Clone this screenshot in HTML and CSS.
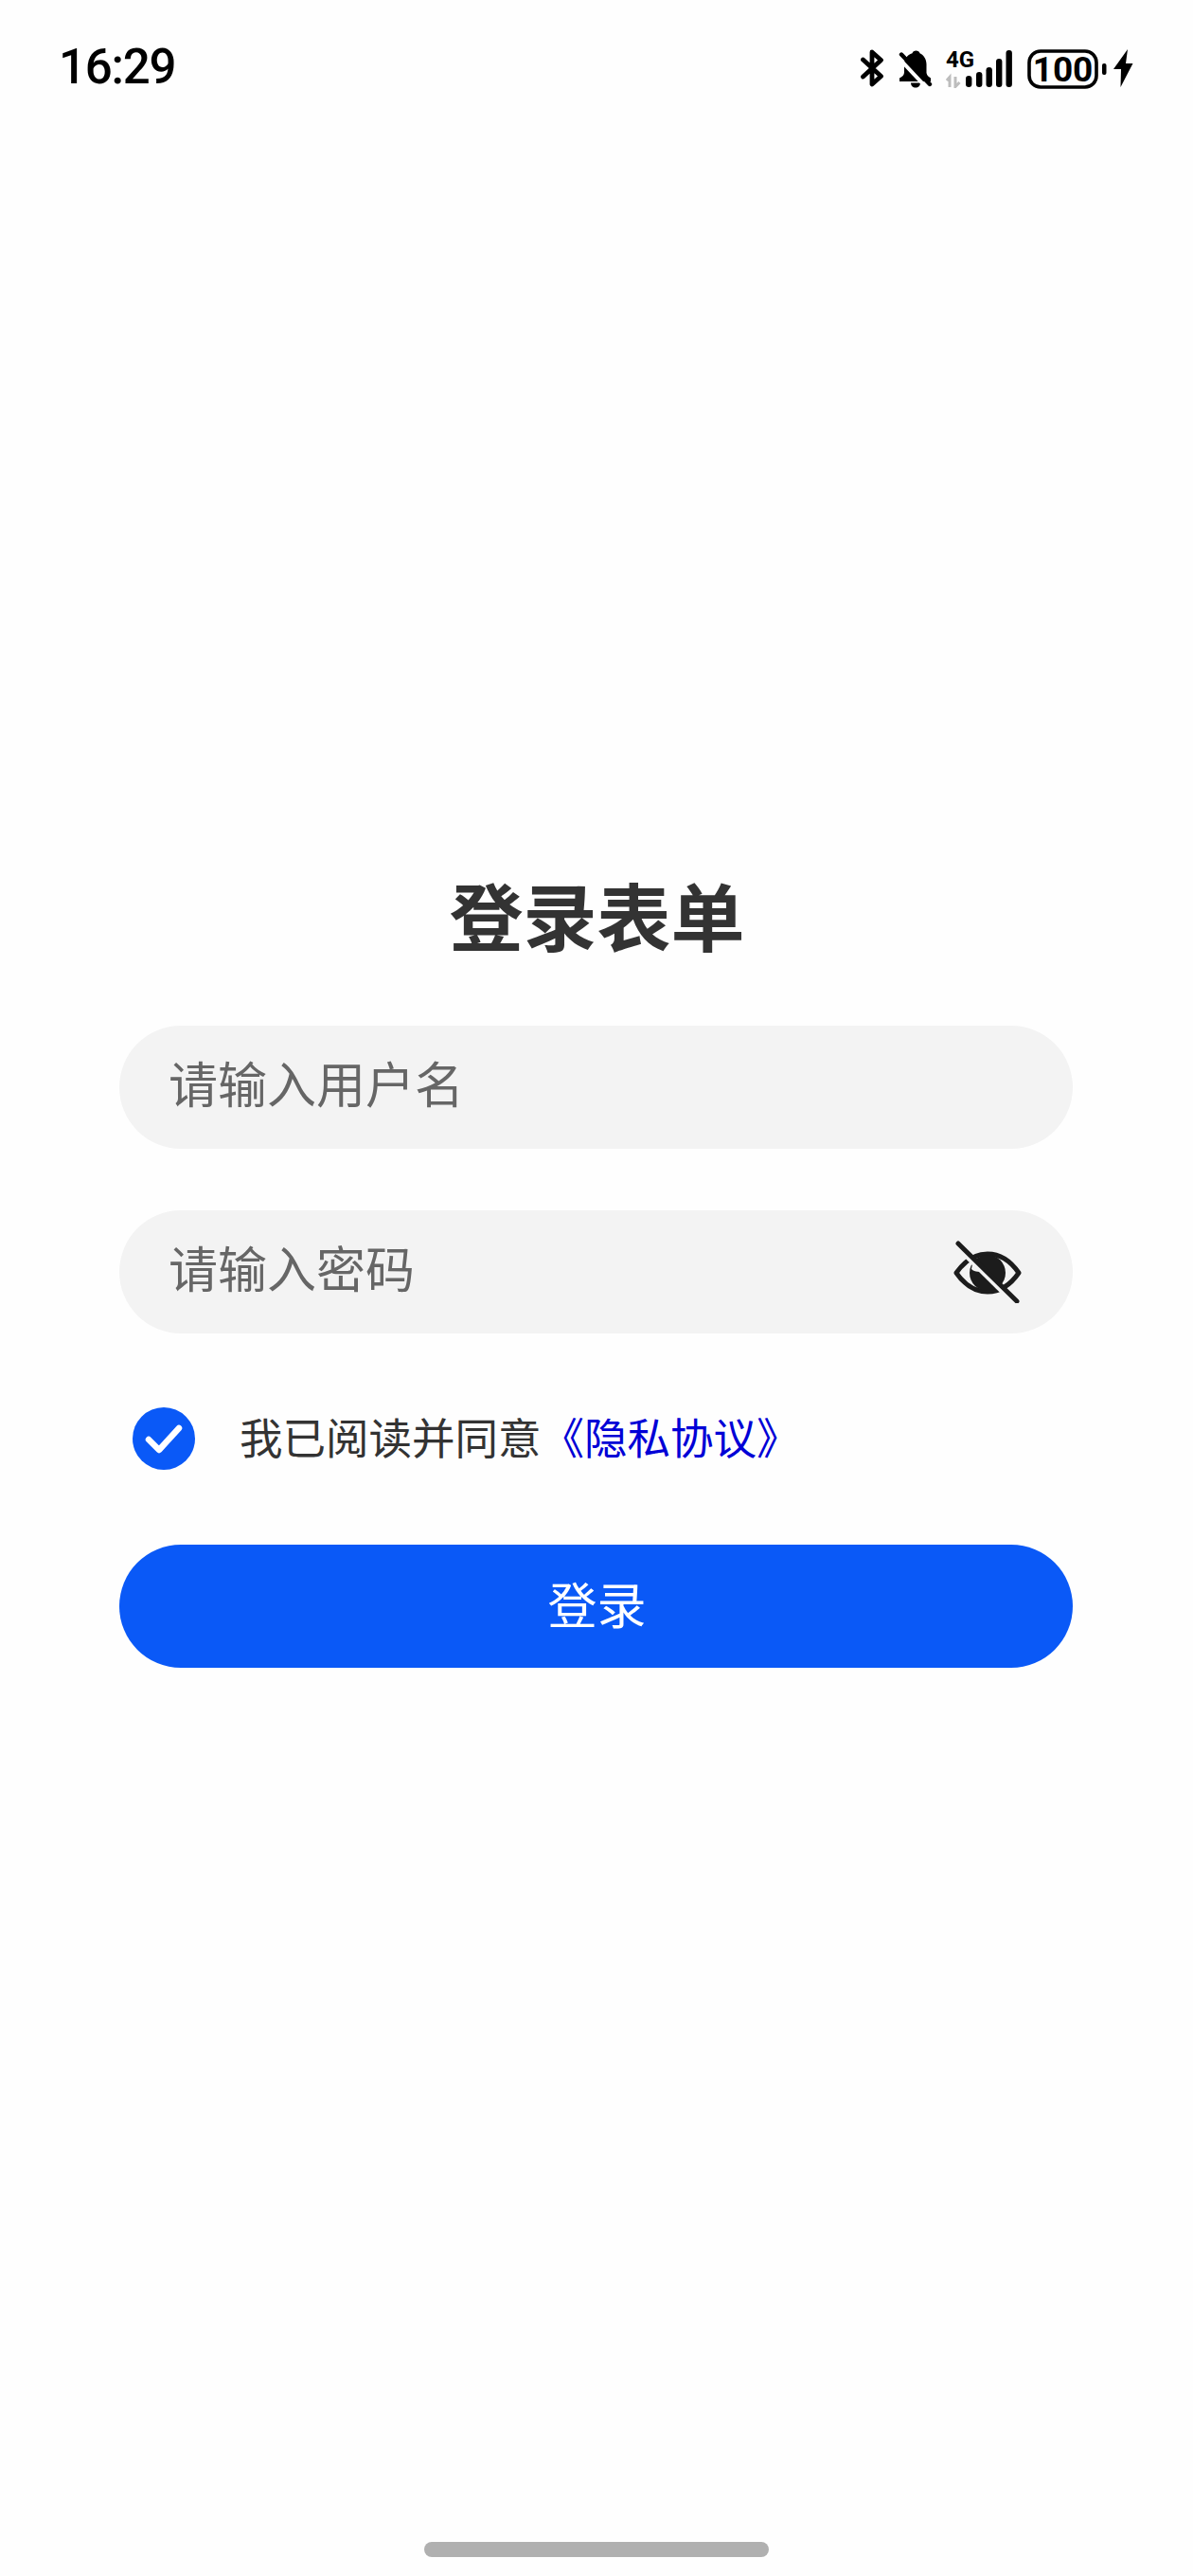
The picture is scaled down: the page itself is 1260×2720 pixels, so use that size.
FILE: index.html
```html
<!DOCTYPE html>
<html lang="zh-CN">
<head>
<meta charset="utf-8">
<title>登录表单</title>
<link rel="stylesheet" href="styles.css">
</head>
<body>
<div class="page">
  <header class="status-bar">
    <span class="time">16:29</span>
    <div class="status-icons">
      <svg class="icon-bt" width="24" height="40" viewBox="0 0 24 40"><path d="M2.500 11 21.500 28.500 12 37V3L21.500 11.500 2.500 29" fill="none" stroke="#000" stroke-width="4.800" stroke-linecap="round" stroke-linejoin="round"/></svg>
      <svg class="icon-bell" width="36" height="42" viewBox="0 0 36 42"><path d="M18.500 1.500c-2 0-3.500 1-4 2.800C9 6 6 10.500 6 16v8.500c0 2.500-2 4.500-5 6V34h33v-3.500c-2.500-1.500-4-3-4.500-5.500V16c0-5.500-3-10-7-11.700-.5-1.800-2-2.800-4-2.800Z" fill="#000"/><path d="M13 35.500h10c0 3-2.200 5-5 5s-5-2-5-5Z" fill="#000"/><path d="M0 9 30 41" stroke="#fff" stroke-width="4"/><path d="M3 5.500 33 37" stroke="#000" stroke-width="4.400" stroke-linecap="round"/></svg>
      <svg class="icon-signal" width="70" height="46" viewBox="0 -6 70 46">
        <text class="net" x="0" y="18">4G</text>
        <path d="M4 39V28.500L1 32M4 30V39" fill="none" stroke="#bdbdbd" stroke-width="3"/>
        <path d="M10 28V38.500L14.500 34" fill="none" stroke="#bdbdbd" stroke-width="3"/>
        <rect x="21" y="27" width="6.400" height="12" rx="3.200"/>
        <rect x="32" y="23" width="6.400" height="16" rx="3.200"/>
        <rect x="42.500" y="18" width="6.400" height="21" rx="3.200"/>
        <rect x="53" y="9" width="6.400" height="30" rx="3"/>
        <rect x="63.500" y="0" width="6.400" height="39" rx="3"/>
      </svg>
      <svg class="icon-battery" width="84" height="42" viewBox="0 0 84 42">
        <rect x="2" y="2" width="71" height="38" rx="12" fill="none" stroke="#000" stroke-width="3.600"/>
        <text class="level" x="37.500" y="34">100</text>
        <rect x="79" y="15" width="4.500" height="12" rx="2"/>
      </svg>
      <svg class="icon-bolt" width="21" height="40" viewBox="0 0 21 40"><path d="M15 0 0 21h8L7.500 40 20.500 15H13Z" fill="#000"/></svg>
    </div>
  </header>

  <main class="form">
    <h1 class="title">登录表单</h1>
    <div class="field"><span class="placeholder">请输入用户名</span></div>
    <div class="field field-password">
      <span class="placeholder">请输入密码</span>
      <svg class="eye" width="72" height="66" viewBox="0 0 72 66">
        <path d="M3 34C12 21 23 14 36 14s24 7 33 20C60 47 49 54 36 54S12 47 3 34Z" fill="none" stroke="#1c1c1c" stroke-width="5" stroke-linejoin="round"/>
        <circle cx="36" cy="34" r="19" fill="#1c1c1c"/>
        <path d="M19 30c3 3 8 4 12 1l-4-8-7 2Z" fill="#f3f3f3"/>
        <path d="M0 3 66 68" stroke="#f3f3f3" stroke-width="5"/>
        <path d="M5 3 67 64" stroke="#1c1c1c" stroke-width="5" stroke-linecap="round"/>
      </svg>
    </div>
    <div class="agree">
      <svg class="check" width="66" height="66" viewBox="0 0 66 66"><circle cx="33" cy="33" r="33" fill="#0a59f7"/><path d="M17 34 28 45 49 22" fill="none" stroke="#fff" stroke-width="6.500" stroke-linecap="round" stroke-linejoin="round"/></svg>
      <p class="agree-text">我已阅读并同意<a class="agree-link" href="#">《隐私协议》</a></p>
    </div>
    <button class="submit" type="button">登录</button>
  </main>

  <div class="home-indicator"></div>
</div>
</body>
</html>
```

FILE: styles.css
```css
* { box-sizing: border-box; }
html, body { margin: 0; padding: 0; }
body {
  background: #fefefe;
  font-family: "Noto Sans CJK SC", "Noto Sans", sans-serif;
}
.page {
  width: 1260px;
  height: 2720px;
  display: flex;
  flex-direction: column;
}
.status-bar {
  height: 94px;
  padding: 40px 63px 0 62px;
  display: flex;
  justify-content: space-between;
  align-items: flex-start;
}
.time {
  font-family: Roboto, sans-serif;
  font-weight: 500;
  font-size: 51px;
  line-height: 60px;
  margin-top: 1px;
  color: #000;
  letter-spacing: -1.200px;
}
.status-icons {
  display: flex;
  align-items: flex-start;
  margin-top: 12px;
}
.status-icons svg { display: block; flex: none; }
.icon-bt { margin-right: 16px; }
.icon-bell { margin-right: 14px; }
.icon-signal { margin-right: 16px; margin-top: -5px; }
.icon-battery { margin-right: 7px; }
.net {
  font-family: Roboto, sans-serif;
  font-weight: 700;
  font-size: 24px;
}
.level {
  font-family: Roboto, sans-serif;
  font-weight: 700;
  font-size: 37px;
  text-anchor: middle;
}
.form {
  flex: 1;
  padding: 813px 127px 0 126px;
  display: flex;
  flex-direction: column;
}
.title {
  margin: 0 0 60px;
  padding-left: 2px;
  font-size: 78px;
  line-height: 116px;
  font-weight: 700;
  color: #333;
  text-align: center;
}
.field {
  height: 130px;
  border-radius: 65px;
  background: #f3f3f3;
  padding: 0 54px 0 52px;
  display: flex;
  align-items: center;
  justify-content: space-between;
  margin-bottom: 65px;
}
.placeholder {
  font-size: 52px;
  line-height: 1;
  color: #666;
  padding-bottom: 10px;
}
.eye { display: block; flex: none; }
.agree {
  display: flex;
  align-items: center;
  padding-left: 14px;
  margin-top: 10px;
  margin-bottom: 76px;
}
.check { display: block; flex: none; margin-right: 47px; }
.agree-text {
  margin: 0;
  font-size: 45.500px;
  line-height: 66px;
  color: #333;
  padding-bottom: 6px;
}
.agree-link {
  color: #0000d6;
  text-decoration: none;
}
.submit {
  height: 130px;
  border: 0;
  border-radius: 65px;
  background: #0a59f7;
  color: #fff;
  font: inherit;
  font-size: 52px;
  padding: 0 0 8px 2px;
}
.home-indicator {
  flex: none;
  width: 364px;
  height: 16px;
  margin: 0 auto 20px;
  border-radius: 8px;
  background: #b0b0b0;
}
```
